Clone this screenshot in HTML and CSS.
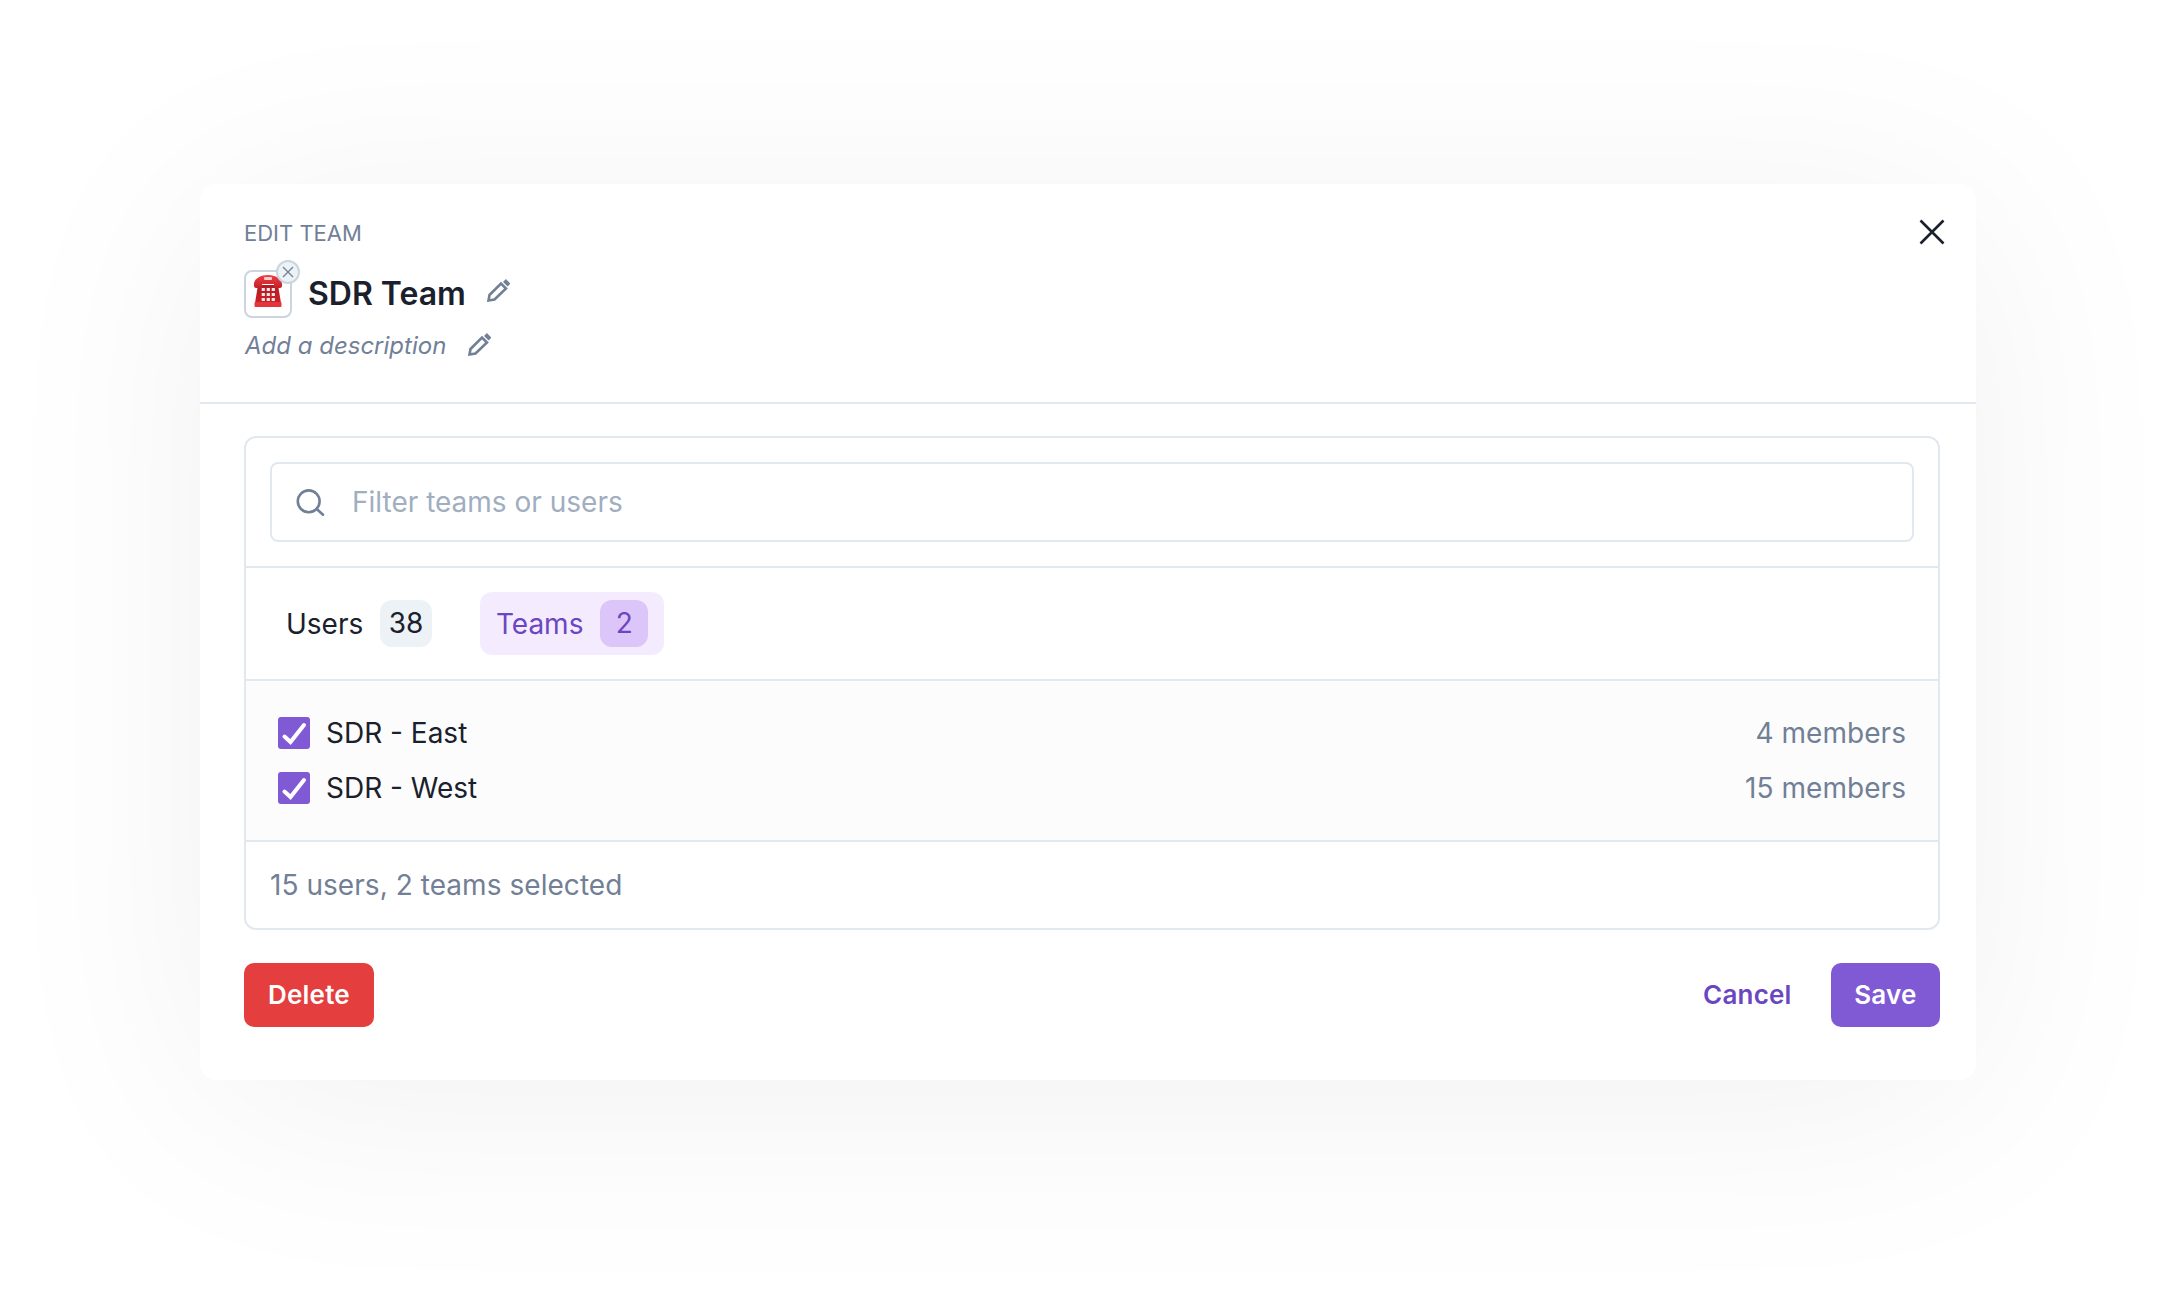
FILE: index.html
```html
<!DOCTYPE html>
<html lang="en">
<head>
  <meta charset="UTF-8">
  <title>Edit team</title>
  <link rel="stylesheet" href="styles.css">
</head>
<body>
  <div class="modal">
    <div class="modal-header">
      <button class="close-button">
        <svg width="26" height="26" viewBox="0 0 26 26" fill="none" stroke="#1a202c" stroke-width="2.6"><path d="M1.5 1.5l23 23M24.500 1.500l-23 23"/></svg>
      </button>
      <div class="eyebrow">EDIT TEAM</div>
      <div class="title-row">
        <div class="emoji-box">
          <svg class="phone" width="34" height="36" viewBox="0 0 34 36">
            <defs>
              <linearGradient id="phoneTop" x1="0" y1="0" x2="0" y2="1"><stop offset="0" stop-color="#ef3f44"/><stop offset="1" stop-color="#c2202a"/></linearGradient>
              <linearGradient id="phoneBody" x1="0" y1="0" x2="0" y2="1"><stop offset="0" stop-color="#b41a21"/><stop offset="1" stop-color="#cc2229"/></linearGradient>
            </defs>
            <path d="M7 12h20l3 18H4z" fill="url(#phoneBody)"/>
            <rect x="3.500" y="29" width="27" height="5" rx="1" fill="#e4353a"/>
            <path d="M3 13C2 6 9 2 17 2s15 4 14 11c0 1-1 2-2 2h-4c-1.500 0-2-1-2-2v-2H11v2c0 1-.5 2-2 2H5c-1 0-2-1-2-2z" fill="url(#phoneTop)"/>
            <rect x="13" y="4" width="8" height="3" rx="1" fill="#f7cccc"/>
            <g fill="#f3e6e6">
              <rect x="10.700" y="15" width="3.200" height="3"/><rect x="15.700" y="15" width="3.200" height="3"/><rect x="20.700" y="15" width="3.200" height="3"/>
              <rect x="10.700" y="20" width="3.200" height="3"/><rect x="15.700" y="20" width="3.200" height="3"/><rect x="20.700" y="20" width="3.200" height="3"/>
              <rect x="10.700" y="25" width="3.200" height="3"/><rect x="15.700" y="25" width="3.200" height="3"/><rect x="20.700" y="25" width="3.200" height="3"/>
            </g>
          </svg>
          <span class="emoji-remove">
            <svg width="12" height="12" viewBox="0 0 12 12" fill="none" stroke="#718096" stroke-width="1.300"><path d="M1 1l10 10M11 1L1 11"/></svg>
          </span>
        </div>
        <h1 class="team-name">SDR Team</h1>
        <svg class="pencil pencil-title" width="24" height="24" viewBox="0 0 24 24" fill="none" stroke="#718096" stroke-width="2.600"><path d="M2.500 21.500l1-5.500L15 4.500l5 5L8.500 20.500z"/><path d="M18.500 1.500l4.500 4.500" stroke-width="4"/></svg>
      </div>
      <div class="description-row">
        <span class="description">Add a description</span>
        <svg class="pencil pencil-description" width="24" height="24" viewBox="0 0 24 24" fill="none" stroke="#718096" stroke-width="2.600"><path d="M2.500 21.500l1-5.500L15 4.500l5 5L8.500 20.500z"/><path d="M18.500 1.500l4.500 4.500" stroke-width="4"/></svg>
      </div>
    </div>

    <div class="modal-body">
      <div class="panel">
        <div class="search-section">
          <div class="search-box">
            <svg width="30" height="30" viewBox="0 0 30 30" fill="none" stroke="#718096" stroke-width="2.600"><circle cx="12.700" cy="14.300" r="10.900"/><path d="M20.700 22l6.300 5.700" stroke-linecap="round"/></svg>
            <span class="search-placeholder">Filter teams or users</span>
          </div>
        </div>
        <div class="tabs">
          <div class="tab">Users <span class="count">38</span></div>
          <div class="tab tab-active">Teams <span class="count">2</span></div>
        </div>
        <div class="list">
          <div class="list-row">
            <span class="checkbox"><svg width="32" height="32" viewBox="0 0 32 32" fill="none" stroke="#fff" stroke-width="4" stroke-linecap="round"><path d="M6.500 19.500l6 5.500L26 8"/></svg></span>
            <span class="row-name">SDR - East</span>
            <span class="row-meta">4 members</span>
          </div>
          <div class="list-row">
            <span class="checkbox"><svg width="32" height="32" viewBox="0 0 32 32" fill="none" stroke="#fff" stroke-width="4" stroke-linecap="round"><path d="M6.500 19.500l6 5.500L26 8"/></svg></span>
            <span class="row-name">SDR - West</span>
            <span class="row-meta">15 members</span>
          </div>
        </div>
        <div class="panel-footer">15 users, 2 teams selected</div>
      </div>

      <div class="actions">
        <button class="btn btn-delete">Delete</button>
        <div class="actions-right">
          <button class="btn btn-cancel">Cancel</button>
          <button class="btn btn-save">Save</button>
        </div>
      </div>
    </div>
  </div>
</body>
</html>
```

FILE: styles.css
```css
* {
  box-sizing: border-box;
}

body {
  margin: 0;
  height: 1296px;
  padding: 184px 200px 0;
  background-color: #fff;
  color: #1a202c;
  font-family: Inter, 'Liberation Sans', sans-serif;
  font-size: 28px;
  overflow: hidden;
}

.modal {
  width: 1776px;
  height: 896px;
  background-color: #fff;
  border-radius: 16px;
  box-shadow: 0 24px 230px rgba(0, 0, 0, 0.06);
}

.modal-header {
  position: relative;
  height: 220px;
  padding: 34px 44px 0;
  border-bottom: 2px solid #e2e8f0;
}

.close-button {
  position: absolute;
  top: 35px;
  right: 31px;
  padding: 0;
  border: none;
  background: none;
  line-height: 0;
}

.eyebrow {
  font-size: 22px;
  line-height: 30px;
  color: #718096;
}

.title-row {
  display: flex;
  align-items: center;
  margin-top: 22px;
}

.emoji-box {
  position: relative;
  display: flex;
  align-items: center;
  justify-content: center;
  width: 48px;
  height: 48px;
  border: 2px solid #cbd5e0;
  border-radius: 8px;
}

.phone {
  margin-bottom: 6px;
}

.emoji-remove {
  position: absolute;
  top: -12px;
  right: -10px;
  display: flex;
  align-items: center;
  justify-content: center;
  width: 24px;
  height: 24px;
  border: 2px solid #cbd5e0;
  border-radius: 50%;
  background-color: #edf2f7;
}

.team-name {
  margin: 0 20px 0 16px;
  font-size: 32px;
  font-weight: 600;
  line-height: 44px;
}

.pencil {
  flex: none;
}

.pencil-title {
  margin-bottom: 6px;
}

.pencil-description {
  margin-bottom: 2px;
}

.description-row {
  display: flex;
  align-items: center;
  margin-top: 10px;
}

.description {
  margin-right: 21px;
  padding-left: 1px;
  font-size: 24px;
  font-style: italic;
  line-height: 36px;
  color: #718096;
}

.modal-body {
  padding: 32px 36px 0 44px;
}

.panel {
  border: 2px solid #e2e8f0;
  border-radius: 12px;
}

.search-section {
  padding: 24px;
  border-bottom: 2px solid #e2e8f0;
}

.search-box {
  display: flex;
  align-items: center;
  gap: 26px;
  height: 80px;
  padding: 0 16px 0 24px;
  border: 2px solid #e2e8f0;
  border-radius: 8px;
}

.search-placeholder {
  color: #a0aec0;
}

.tabs {
  display: flex;
  align-items: center;
  gap: 32px;
  height: 113px;
  padding: 0 24px;
  border-bottom: 2px solid #e2e8f0;
}

.tab {
  display: flex;
  align-items: center;
  gap: 17px;
  height: 63px;
  padding: 0 16px;
  border-radius: 12px;
}

.count {
  min-width: 48px;
  height: 47px;
  padding: 0 8.5px;
  border-radius: 12px;
  background-color: #edf2f7;
  line-height: 47px;
  text-align: center;
}

.tab-active {
  background-color: #f4ebff;
  color: #6b46c1;
}

.tab-active .count {
  background-color: #dcc6f9;
}

.list {
  display: flex;
  flex-direction: column;
  gap: 7px;
  height: 161px;
  padding: 28px 32px 0;
  border-bottom: 2px solid #e2e8f0;
  background-color: #fcfcfd;
}

.list-row {
  display: flex;
  align-items: center;
  height: 48px;
}

.checkbox {
  display: flex;
  width: 32px;
  height: 32px;
  margin-right: 16px;
  border-radius: 3px;
  background-color: #805ad5;
}

.row-meta {
  margin-left: auto;
  letter-spacing: 0.05px;
  color: #718096;
}

.panel-footer {
  height: 86px;
  padding: 0 24px;
  letter-spacing: 0.05px;
  line-height: 86px;
  color: #718096;
}

.actions {
  display: flex;
  align-items: center;
  justify-content: space-between;
  margin-top: 33px;
}

.actions-right {
  display: flex;
  align-items: center;
  gap: 15px;
}

.btn {
  height: 64px;
  padding: 0 24px 1px;
  border: none;
  border-radius: 10px;
  background: none;
  font-family: inherit;
  font-size: 26px;
  font-weight: 600;
  letter-spacing: 0.2px;
  color: #fff;
}

.btn-delete {
  background-color: #e53e3e;
}

.btn-cancel {
  color: #6b46c1;
}

.btn-save {
  padding: 0 23.5px 1px;
  background-color: #805ad5;
}
```
